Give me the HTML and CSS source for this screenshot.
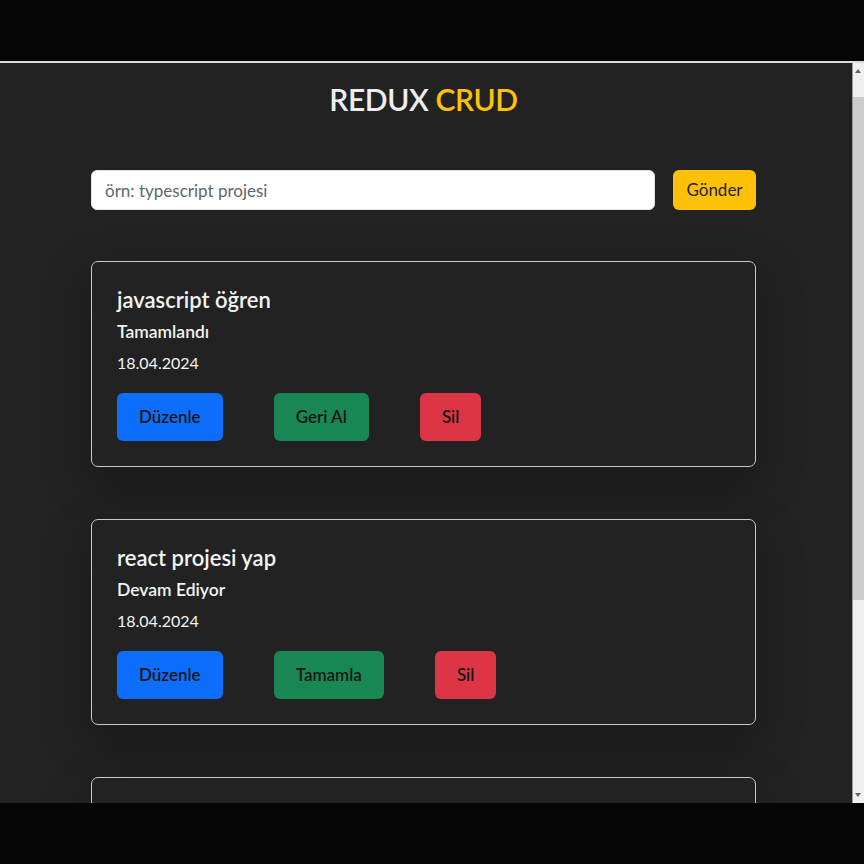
FILE: index.html
```html
<!DOCTYPE html>
<html lang="tr">
<head>
<meta charset="utf-8">
<title>Redux CRUD</title>
<link rel="stylesheet" href="styles.css">
</head>
<body>
<div class="screen">
  <div class="topline"></div>
  <div class="window">
    <div class="viewport">
      <div class="app">
        <h1 class="title">REDUX <span class="accent">CRUD</span></h1>
        <form class="add-form">
          <input class="add-input" type="text" placeholder="örn: typescript projesi">
          <button class="btn btn-warning" type="button">Gönder</button>
        </form>
        <div class="list">
          <div class="card">
            <h5 class="card-title">javascript öğren</h5>
            <h6 class="card-status">Tamamlandı</h6>
            <p class="card-date">18.04.2024</p>
            <div class="actions">
              <button class="btn btn-lg btn-primary" type="button">Düzenle</button>
              <button class="btn btn-lg btn-success" type="button">Geri Al</button>
              <button class="btn btn-lg btn-danger" type="button">Sil</button>
            </div>
          </div>
          <div class="card">
            <h5 class="card-title">react projesi yap</h5>
            <h6 class="card-status">Devam Ediyor</h6>
            <p class="card-date">18.04.2024</p>
            <div class="actions">
              <button class="btn btn-lg btn-primary" type="button">Düzenle</button>
              <button class="btn btn-lg btn-success" type="button">Tamamla</button>
              <button class="btn btn-lg btn-danger" type="button">Sil</button>
            </div>
          </div>
          <div class="card card-partial"></div>
        </div>
      </div>
    </div>
    <div class="scrollbar">
      <div class="arrow arrow-up"></div>
      <div class="track"><div class="thumb"></div></div>
      <div class="arrow arrow-down"></div>
    </div>
  </div>
</div>
</body>
</html>
```
FILE: styles.css
```css
* { box-sizing: border-box; }
html, body { margin: 0; padding: 0; }
body {
  background: #050505;
  font-family: "Lato", "Open Sans", sans-serif;
  width: 864px;
  height: 864px;
  overflow: hidden;
}
.screen { padding-top: 61px; }
.topline { height: 2px; background: #dcdcdc; }
.window { display: flex; height: 740px; }
.viewport {
  flex: 1;
  background: #222222;
  overflow: hidden;
  padding: 18px 96px 0 91px;
  border-right: 1px solid #9a9a9a;
}
.app { width: 665px; }
.title {
  margin: 0;
  text-align: center;
  font-size: 30px;
  line-height: 37px;
  font-weight: 600;
  letter-spacing: -0.4px;
  color: #eceef0;
}
.accent { color: #ffc107; }
.add-form { display: flex; gap: 18px; margin-top: 52px; }
.add-input {
  flex: 1;
  height: 40px;
  border: 1px solid #dee2e6;
  border-radius: 6px;
  background: #fff;
  padding: 0 13px;
  font: inherit;
  font-size: 17px;
  color: #212529;
}
.add-input::placeholder { color: #5f666d; }
.btn {
  border: 1px solid transparent;
  border-radius: 6px;
  font-family: inherit;
  font-size: 17px;
  line-height: 24px;
  color: #212529;
  padding: 7px 14px;
  cursor: pointer;
}
.add-form .btn { width: 83px; height: 40px; padding: 0; }
.btn-lg { padding: 11px 21px; font-size: 17px; font-weight: 600; color: #151515; }
.btn-warning { background: #ffc107; }
.btn-primary { background: #0d6efd; }
.btn-success { background: #198754; }
.btn-danger { background: #dc3545; }
.list { display: flex; flex-direction: column; gap: 52px; margin-top: 51px; }
.card {
  border: 1px solid #c9c9c9;
  border-radius: 7px;
  background: #222222;
  padding: 26px 25px 26px 25px;
  height: 206px;
  box-shadow: 0 16px 48px rgba(0, 0, 0, 0.28);
  color: #f2f3f4;
}
.card-partial { flex-shrink: 0; }
.card-title { margin: 0 0 8px; font-size: 22px; line-height: 24px; font-weight: 600; }
.card-status { margin: 0 0 7px; font-size: 17.5px; line-height: 24px; font-weight: 600; }
.card-date { margin: 0 0 18px; font-size: 16px; line-height: 24px; }
.actions { display: flex; gap: 51px; }
.scrollbar {
  width: 11px;
  background: #f0f0f0;
  display: flex;
  flex-direction: column;
}
.arrow { height: 17px; position: relative; }
.arrow-up::after, .arrow-down::after {
  content: "";
  position: absolute;
  left: 2px;
  border-left: 3.5px solid transparent;
  border-right: 3.5px solid transparent;
}
.arrow-up::after { top: 6px; border-bottom: 4px solid #606060; }
.arrow-down::after { bottom: 6px; border-top: 4px solid #606060; }
.track { flex: 1; padding-top: 17px; }
.thumb { height: 503px; background: #cdcdcd; }
```
